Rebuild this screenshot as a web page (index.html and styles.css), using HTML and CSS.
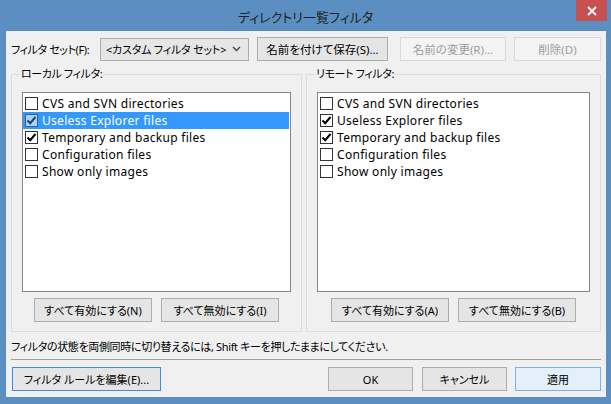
FILE: index.html
```html
<!DOCTYPE html>
<html lang="ja">

<head>
    <meta charset="UTF-8">
    <title>ディレクトリ一覧フィルタ</title>
    <link rel="stylesheet" href="styles.css">
</head>

<body>
    <div class="window">
        <div class="titlebar">
            <span class="title">ディレクトリ一覧フィルタ</span>
            <span class="close">
                <svg width="10" height="10" viewBox="0 0 10 10"><path d="M1 1 L9 9 M9 1 L1 9" stroke="#fff" stroke-width="1.8"/></svg>
            </span>
        </div>

        <div class="content">
            <div class="toolbar">
                <span class="label">フィルタ セット(F):</span>
                <div class="combo">
                    <span>&lt;カスタム フィルタ セット&gt;</span>
                    <svg width="9" height="6" viewBox="0 0 9 6"><path d="M1 1 L4.5 4.5 L8 1" fill="none" stroke="#444" stroke-width="1.4"/></svg>
                </div>
                <button class="btn btn-save">名前を付けて保存(S)...</button>
                <button class="btn btn-rename" disabled>名前の変更(R)...</button>
                <button class="btn btn-delete" disabled>削除(D)</button>
            </div>

            <div class="groups">
                <fieldset class="group">
                    <legend>ローカル フィルタ:</legend>
                    <ul class="listbox">
                        <li><span class="check"></span>CVS and SVN directories</li>
                        <li class="selected"><span class="check on"><svg width="11" height="11" viewBox="0 0 11 11"><path d="M1.5 5.5 L4.2 8.2 L9.5 2" fill="none" stroke="#1b3f73" stroke-width="2"/></svg></span>Useless Explorer files</li>
                        <li><span class="check on"><svg width="11" height="11" viewBox="0 0 11 11"><path d="M1.5 5.5 L4.2 8.2 L9.5 2" fill="none" stroke="#000" stroke-width="2"/></svg></span>Temporary and backup files</li>
                        <li><span class="check"></span>Configuration files</li>
                        <li><span class="check"></span>Show only images</li>
                    </ul>
                    <div class="group-buttons">
                        <button class="btn btn-all">すべて有効にする(N)</button>
                        <button class="btn btn-all">すべて無効にする(I)</button>
                    </div>
                </fieldset>

                <fieldset class="group">
                    <legend>リモート フィルタ:</legend>
                    <ul class="listbox">
                        <li><span class="check"></span>CVS and SVN directories</li>
                        <li><span class="check on"><svg width="11" height="11" viewBox="0 0 11 11"><path d="M1.5 5.5 L4.2 8.2 L9.5 2" fill="none" stroke="#000" stroke-width="2"/></svg></span>Useless Explorer files</li>
                        <li><span class="check on"><svg width="11" height="11" viewBox="0 0 11 11"><path d="M1.5 5.5 L4.2 8.2 L9.5 2" fill="none" stroke="#000" stroke-width="2"/></svg></span>Temporary and backup files</li>
                        <li><span class="check"></span>Configuration files</li>
                        <li><span class="check"></span>Show only images</li>
                    </ul>
                    <div class="group-buttons">
                        <button class="btn btn-all">すべて有効にする(A)</button>
                        <button class="btn btn-all">すべて無効にする(B)</button>
                    </div>
                </fieldset>
            </div>

            <p class="hint">フィルタの状態を両側同時に切り替えるには, Shift キーを押したままにしてください.</p>

            <div class="footer">
                <button class="btn btn-edit">フィルタ ルールを編集(E)...</button>
                <div class="dialog-buttons">
                    <button class="btn btn-dlg">OK</button>
                    <button class="btn btn-dlg">キャンセル</button>
                    <button class="btn btn-dlg btn-default">適用</button>
                </div>
            </div>
        </div>
    </div>
</body>

</html>
```

FILE: styles.css
```css
* {
    box-sizing: border-box;
    margin: 0;
    padding: 0;
}

body {
    font-family: "Noto Sans", "Noto Sans CJK JP", sans-serif;
    font-size: 11px;
    letter-spacing: -0.2px;
    font-feature-settings: "palt";
    color: #000;
    background-color: #5b8fc1;
    white-space: nowrap;
}

.window {
    width: 611px;
    height: 404px;
    background-color: #5b8fc1;
}

/* Title bar */
.titlebar {
    position: relative;
    height: 31px;
    display: flex;
    justify-content: center;
    align-items: center;
}

.title {
    font-size: 13px;
    letter-spacing: 0;
    color: #222;
    padding-top: 1px;
}

.close {
    position: absolute;
    top: 0;
    right: 4px;
    width: 31px;
    height: 21px;
    background-color: #c75050;
    display: flex;
    justify-content: center;
    align-items: center;
}

/* Dialog body */
.content {
    margin: 0 5px 0 6px;
    height: 366px;
    background-color: #f0f0f0;
    padding: 6px 5px 0 5px;
}

.toolbar {
    display: flex;
    align-items: center;
    height: 24px;
}

.label {
    width: 89px;
    letter-spacing: -0.4px;
}

.combo {
    width: 149px;
    height: 23px;
    border: 1px solid #acacac;
    background-color: #e6e6e6;
    display: flex;
    justify-content: space-between;
    align-items: center;
    padding: 0 7px 0 5px;
}

.btn {
    font-family: inherit;
    font-size: 11px;
    letter-spacing: 0;
    font-feature-settings: "palt";
    height: 24px;
    border: 1px solid #adadad;
    background-color: #e5e5e5;
    color: #000;
}

.btn:disabled {
    background-color: #f4f4f4;
    border-color: #dadada;
    color: #9c9c9c;
}

.btn-save {
    width: 131px;
    margin-left: 8px;
    font-size: 11.5px;
}

.btn-rename {
    width: 106px;
    margin-left: 12px;
    font-size: 11.5px;
}

.btn-delete {
    width: 87px;
    margin-left: 8px;
    font-size: 11.5px;
}

/* Filter groups */
.groups {
    display: grid;
    grid-template-columns: 291px 295px;
    gap: 4px;
    margin-top: 6px;
}

.group {
    border: 1px solid #dcdcdc;
    padding: 11px 10px 9px 10px;
}

.group legend {
    line-height: 14px;
    margin-left: -2px;
    padding: 0 1px;
    letter-spacing: -0.4px;
}

.listbox {
    list-style: none;
    height: 200px;
    background-color: #fff;
    border: 1px solid #828790;
    padding-top: 2px;
    font-size: 12px;
    letter-spacing: 0.3px;
}

.listbox li {
    height: 17px;
    display: flex;
    align-items: center;
    padding-left: 2px;
    margin-right: 1px;
    line-height: 17px;
}

.listbox li.selected {
    background-color: #3399ff;
    color: #fff;
}

.check {
    width: 13px;
    height: 13px;
    border: 1px solid #333;
    background-color: #fff;
    margin-right: 4px;
    display: flex;
    justify-content: center;
    align-items: center;
}

.selected .check {
    background-color: #a9d2fb;
    border-color: #35638f;
}

.group-buttons {
    display: flex;
    justify-content: center;
    gap: 9px;
    margin-top: 6px;
}

.btn-all {
    width: 118px;
}

.hint {
    line-height: 16px;
    margin-top: 7px;
    letter-spacing: -0.35px;
}

/* Bottom buttons */
.footer {
    display: flex;
    justify-content: space-between;
    border-top: 1px solid #a0a0a0;
    margin-top: 4px;
    padding-top: 7px;
}

.btn-edit {
    width: 149px;
    margin-left: 1px;
    border-color: #3e8fdc;
}

.dialog-buttons {
    display: flex;
    gap: 9px;
}

.btn-dlg {
    width: 85px;
}

.btn-default {
    width: 86px;
    margin-left: -1px;
    background-color: #e3effb;
    border-color: #7ab2e8;
}
```
